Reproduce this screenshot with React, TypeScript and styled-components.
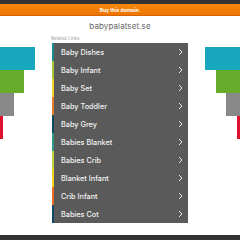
import React from 'react';
import styled, { createGlobalStyle } from 'styled-components';

const GlobalStyle = createGlobalStyle`
    html, body {
        margin: 0;
        padding: 0;
        background: #ffffff;
        font-family: Inter, 'Open Sans', sans-serif;
    }
`;

const Page = styled.div`
    width: 240px;
    height: 240px;
    display: flex;
    flex-direction: column;
    overflow: hidden;
`;

const TopBar = styled.div`
    height: 4px;
    background: #333333;
`;

const BuyBar = styled.div`
    height: 11px;
    background: linear-gradient(#f7890c, #ee7402);
    border-bottom: 1px solid #d86400;
    display: flex;
    align-items: center;
    justify-content: center;
    color: #ffffff;
    font-size: 5px;
    font-weight: 700;
`;

const Title = styled.h1`
    margin: 3px 0 0;
    height: 14px;
    line-height: 14px;
    text-align: center;
    font-size: 8px;
    font-weight: 400;
    color: #666666;
    letter-spacing: 0.1px;
`;

const Body = styled.div`
    display: flex;
    justify-content: space-between;
    align-items: flex-start;
`;

const Side = styled.div<{ $right?: boolean }>`
    width: 40px;
    padding-top: 14px;
    display: flex;
    flex-direction: column;
    align-items: ${(p) => (p.$right ? 'flex-end' : 'flex-start')};
`;

const Bar = styled.div<{ $w: number; $c: string }>`
    width: ${(p) => p.$w}px;
    height: 23px;
    background: ${(p) => p.$c};
`;

const Center = styled.div`
    width: 136px;
    margin-top: 2px;
`;

const Caption = styled.div`
    height: 7px;
    line-height: 7px;
    font-size: 4.5px;
    color: #9a9a9a;
    margin-left: -1px;
`;

const List = styled.ul`
    list-style: none;
    margin: 1px 0 0;
    padding: 0;
    background: #5a5a5a;
`;

const Row = styled.li<{ $c: string }>`
    height: 18px;
    display: flex;
    align-items: center;
    justify-content: space-between;
    border-left: 2px solid ${(p) => p.$c};
    padding: 0 5px 0 7px;
    box-sizing: border-box;
    color: #f2f2f2;
    font-size: 7.3px;
    font-weight: 500;
`;

const Chevron = () => (
    <svg width="5" height="8" viewBox="0 0 5 8">
        <polyline points="1,1 4,4 1,7" fill="none" stroke="#e8e8e8" strokeWidth="1" />
    </svg>
);

const BottomBar = styled.div`
    margin-top: auto;
    height: 5px;
    background: #333333;
`;

const links: [string, string][] = [
    ['Baby Dishes', '#1d8a8e'],
    ['Baby Infant', '#a7c638'],
    ['Baby Set', '#f2d32a'],
    ['Baby Toddler', '#e8792a'],
    ['Baby Grey', '#0f4a5c'],
    ['Babies Blanket', '#2c9a82'],
    ['Babies Crib', '#c2d43a'],
    ['Blanket Infant', '#f4d31e'],
    ['Crib Infant', '#ea6e1e'],
    ['Babies Cot', '#0f4868'],
];

const bars: [number, string][] = [
    [35, '#17a8bf'],
    [24, '#66ad2b'],
    [14, '#898989'],
    [3, '#e2122f'],
];

export default function App() {
    return (
        <Page>
            <GlobalStyle />
            <TopBar />
            <BuyBar>Buy this domain.</BuyBar>
            <Title>babypalatset.se</Title>
            <Body>
                <Side>
                    {bars.map(([w, c]) => (
                        <Bar key={c} $w={w} $c={c} />
                    ))}
                </Side>
                <Center>
                    <Caption>Related Links</Caption>
                    <List>
                        {links.map(([label, c]) => (
                            <Row key={label} $c={c}>
                                {label}
                                <Chevron />
                            </Row>
                        ))}
                    </List>
                </Center>
                <Side $right>
                    {bars.map(([w, c]) => (
                        <Bar key={c} $w={w} $c={c} />
                    ))}
                </Side>
            </Body>
            <BottomBar />
        </Page>
    );
}
